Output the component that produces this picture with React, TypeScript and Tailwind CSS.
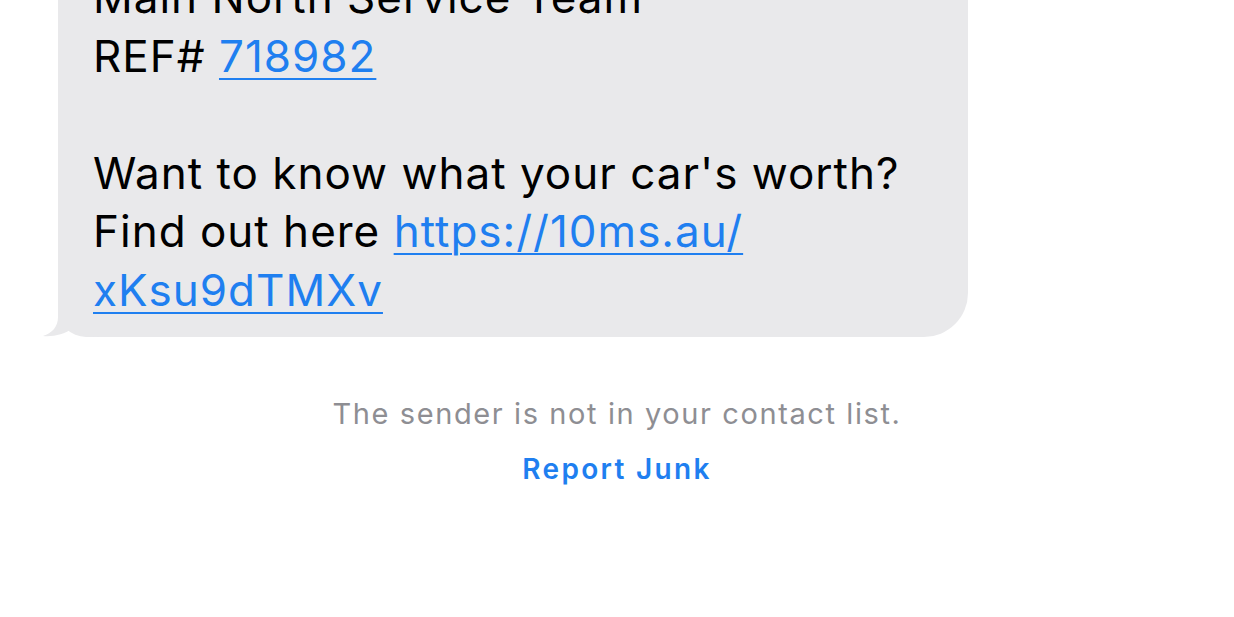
import React from "react";

export default function App() {
  const link = "text-[#1f7ff0] underline decoration-[2px] underline-offset-[6px]";
  return (
    <div className="w-[1234px] h-[617px] bg-white overflow-hidden font-['Inter',sans-serif]">
      <div className="relative ml-[58px] mt-[-50px] w-[910px] rounded-[44px] rounded-bl-[28px] bg-[#e9e9eb] pl-[35px] pr-[30px] pt-[18px] pb-[18px] text-[44px] leading-[58.5px] text-black tracking-[1px]">
        <svg className="absolute left-[-16px] bottom-[0px]" width="60" height="40" viewBox="0 0 60 40">
          <path d="M16 0 L16 20 C16 30 10 36 1 39 C12 40 22 37 30 32 C36 36 44 39 60 40 L60 0 Z" fill="#e9e9eb" />
        </svg>
        <div className="relative">Main North Service Team</div>
        <div className="relative">
          REF# <span className={link}>718982</span>
        </div>
        <div className="h-[58.5px]" />
        <div className="relative">Want to know what your car's worth?</div>
        <div className="relative">
          Find out here <span className={link}>https://10ms.au/</span>
        </div>
        <div className="relative">
          <span className={link}>xKsu9dTMXv</span>
        </div>
      </div>
      <div className="mt-[59px] text-center text-[29px] leading-[36px] tracking-[1.6px] text-[#8e8e93]">
        The sender is not in your contact list.
      </div>
      <div className="mt-[19px] text-center text-[28px] leading-[36px] tracking-[2.3px] font-semibold text-[#1f7ff0]">
        Report Junk
      </div>
    </div>
  );
}
